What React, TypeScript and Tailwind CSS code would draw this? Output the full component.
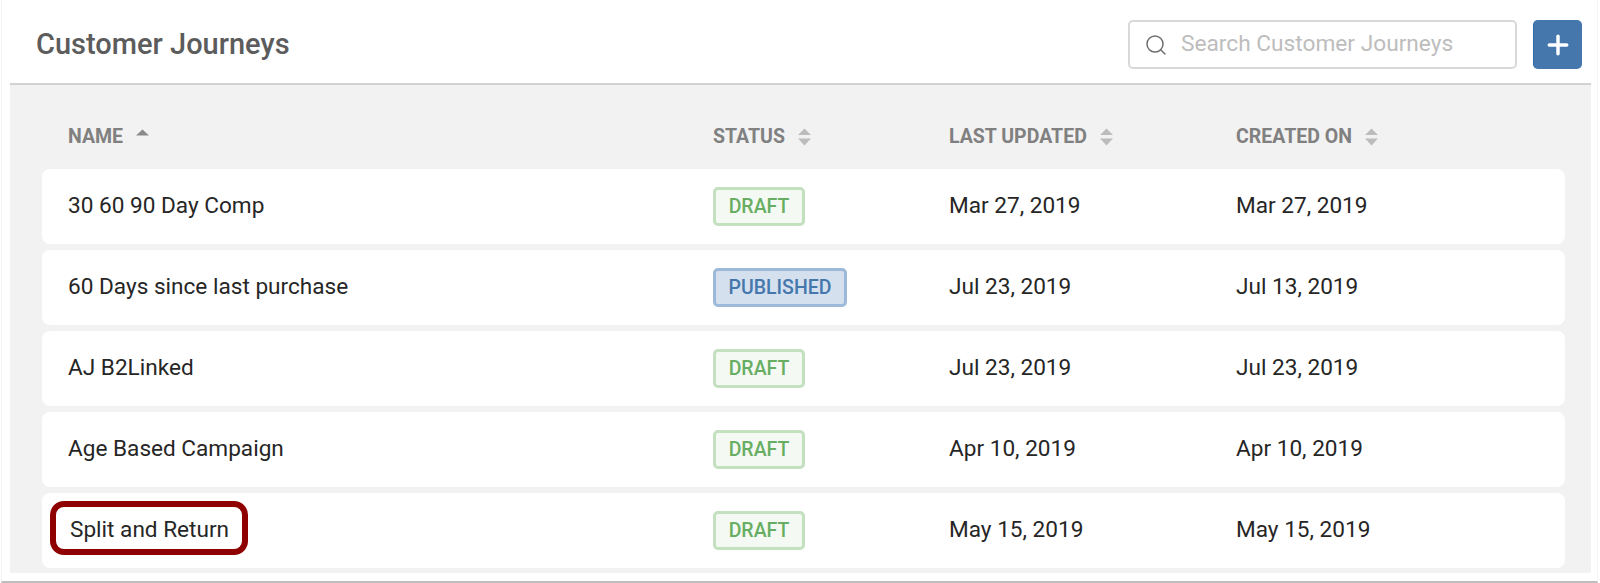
import { Plus, Search } from "lucide-react";

const rows = [
  { name: "30 60 90 Day Comp", status: "DRAFT", updated: "Mar 27, 2019", created: "Mar 27, 2019" },
  { name: "60 Days since last purchase", status: "PUBLISHED", updated: "Jul 23, 2019", created: "Jul 13, 2019" },
  { name: "AJ B2Linked", status: "DRAFT", updated: "Jul 23, 2019", created: "Jul 23, 2019" },
  { name: "Age Based Campaign", status: "DRAFT", updated: "Apr 10, 2019", created: "Apr 10, 2019" },
  { name: "Split and Return", status: "DRAFT", updated: "May 15, 2019", created: "May 15, 2019", highlight: true },
];

function SortIcon({ up }: { up?: boolean }) {
  if (up) {
    return (
      <svg width="13" height="7" viewBox="0 0 13 7" className="mb-[9px] ml-[13px]">
        <path d="M6.5 0.5 L13 6.5 H0 Z" fill="#8a8a8a" />
      </svg>
    );
  }
  return (
    <svg width="13" height="18" viewBox="0 0 13 18" className="ml-[13px]">
      <path d="M6.5 0.5 L13 7 H0 Z M0 10.5 H13 L6.5 17.5 Z" fill="#bcbcbc" />
    </svg>
  );
}

function StatusBadge({ status }: { status: string }) {
  if (status === "PUBLISHED") {
    return (
      <span className="inline-flex h-[39px] w-[134px] items-center justify-center rounded-[5px] border-[3px] border-[#9db9da] bg-[#d4e0ee] text-[19.5px] font-medium text-[#4577ad]">
        {status}
      </span>
    );
  }
  return (
    <span className="inline-flex h-[39px] w-[92px] items-center justify-center rounded-[5px] border-[3px] border-[#c3e0bf] bg-[#f4f9f3] text-[19.5px] font-medium text-[#67ae62]">
      {status}
    </span>
  );
}

export default function App() {
  return (
    <div className="flex h-[583px] w-[1600px] flex-col overflow-hidden bg-white pr-[2px] pl-[1px] font-['Roboto',sans-serif]">
      <div className="flex flex-1 flex-col border-x border-b-2 border-x-[#f4f4f4] border-b-[#bdbdbd]">
        <header className="ml-[8px] mr-[6px] flex h-[85px] shrink-0 items-start justify-between border-b-2 border-[#d2d2d2] pt-[20px] pr-[9px] pl-[26px]">
          <h1 className="mt-[4px] text-[29px] leading-[40px] font-medium text-[#5c5c5c]">Customer Journeys</h1>
          <div className="flex gap-[16px]">
            <div className="flex h-[49px] w-[389px] items-center rounded-[5px] border-2 border-[#d9d9d9] bg-white pl-[14px]">
              <Search className="h-[24px] w-[24px] text-[#6f6f6f]" strokeWidth={1.5} />
              <span className="ml-[13px] text-[22.7px] text-[#bdbdbd]">Search Customer Journeys</span>
            </div>
            <button
              type="button"
              className="flex h-[49px] w-[49px] items-center justify-center rounded-[5px] border-l border-[#2f6ba8] bg-[#4577ad] text-white"
            >
              <Plus className="h-[30px] w-[30px]" strokeWidth={2.75} />
            </button>
          </div>
        </header>

        <main className="mr-[6px] mb-[8px] ml-[8px] flex-1 bg-[#f2f2f2] pr-[26px] pl-[32px]">
          <div className="grid h-[84px] grid-cols-[645px_236px_287px_1fr] items-center pt-[20px] pl-[26px] text-[19.5px] font-bold text-[#808080]">
            <div className="flex items-center">
              NAME
              <SortIcon up />
            </div>
            <div className="flex items-center">
              STATUS
              <SortIcon />
            </div>
            <div className="flex items-center">
              LAST UPDATED
              <SortIcon />
            </div>
            <div className="flex items-center">
              CREATED ON
              <SortIcon />
            </div>
          </div>

          <div className="flex flex-col gap-[6.5px]">
            {rows.map((row) => (
              <div
                key={row.name}
                className="grid h-[74.5px] grid-cols-[645px_236px_287px_1fr] items-center rounded-[8px] bg-white pl-[26px] text-[22.6px] text-[#262626]"
              >
                <div className="relative">
                  {row.highlight ? <span className="ml-[2px]">{row.name}</span> : row.name}
                  {row.highlight && (
                    <span className="absolute top-[-12px] left-[-18px] h-[54px] w-[198px] rounded-[14px] border-[6px] border-[#8f0000]" />
                  )}
                </div>
                <div>
                  <StatusBadge status={row.status} />
                </div>
                <div>{row.updated}</div>
                <div>{row.created}</div>
              </div>
            ))}
          </div>
        </main>
      </div>
    </div>
  );
}
